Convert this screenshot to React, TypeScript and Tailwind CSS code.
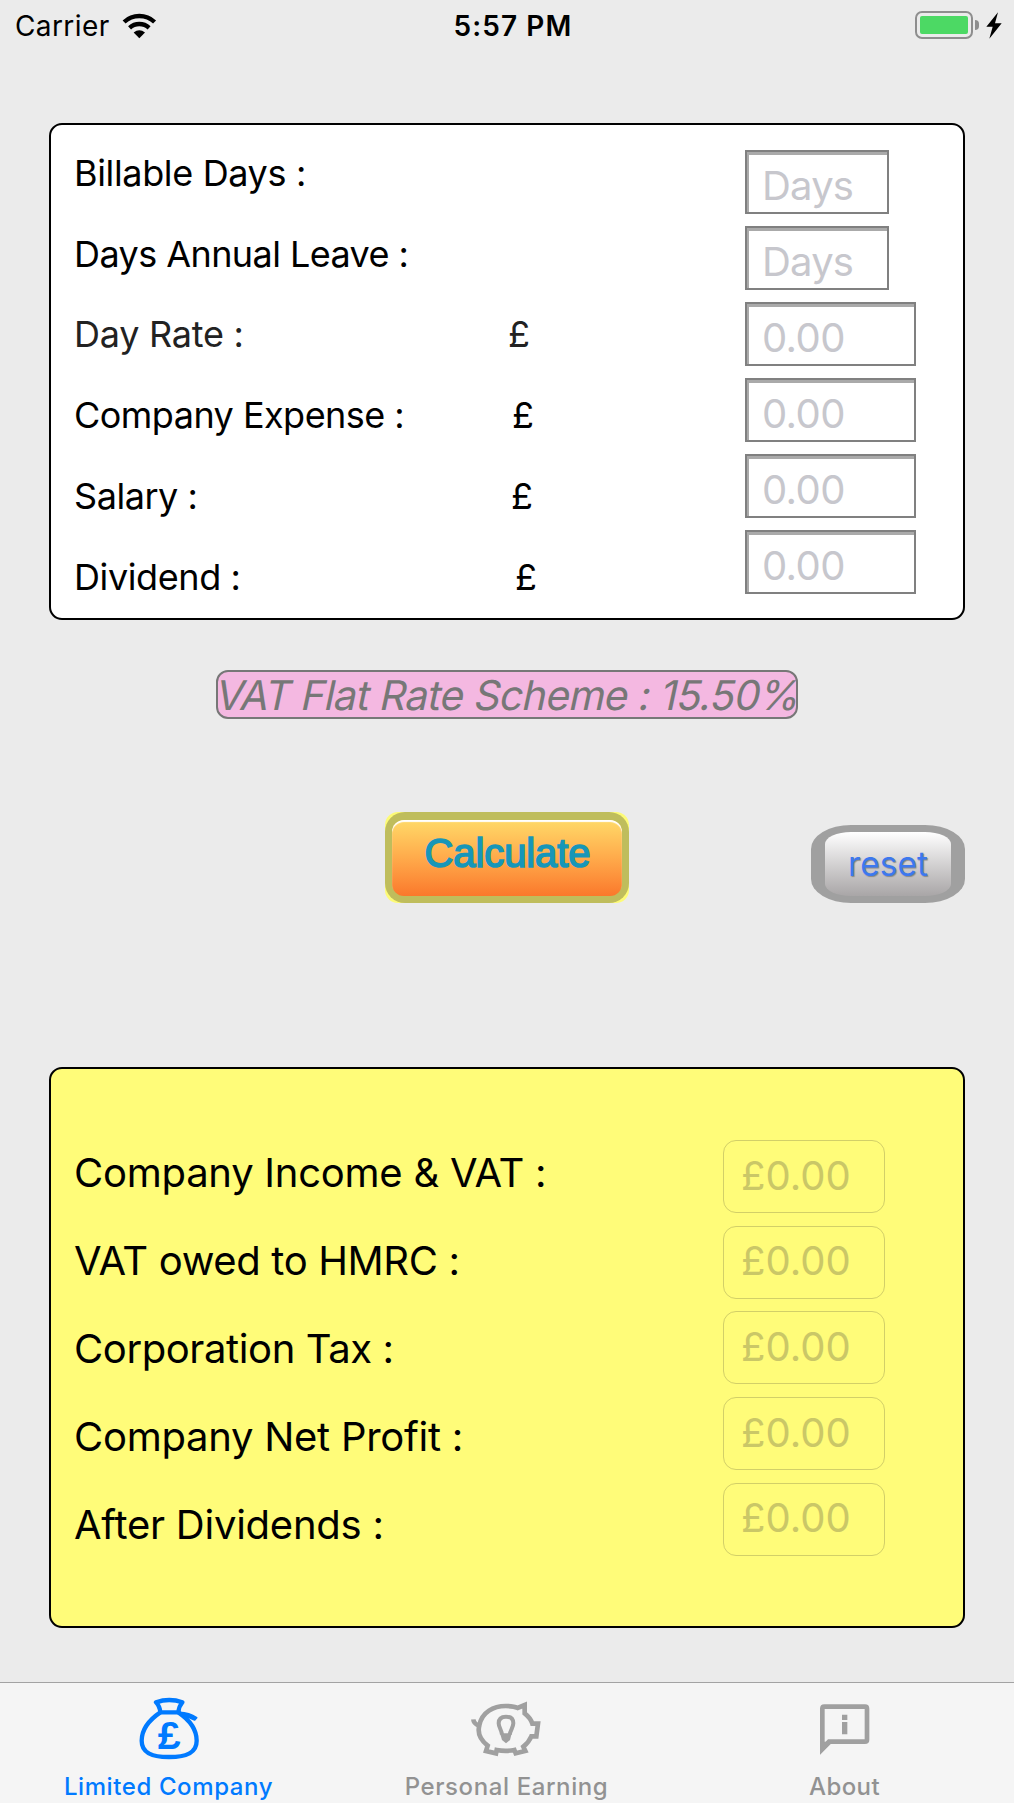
import React from "react";

type InputRow = {
  label: string;
  track: string;
  hint: string;
  width: string;
  tone: string;
  pound?: string;
};

const inputRows: InputRow[] = [
  { label: "Billable Days :", track: "tracking-[-0.35px]", hint: "Days", width: "w-[144px]", tone: "text-black" },
  { label: "Days Annual Leave :", track: "tracking-[-0.57px]", hint: "Days", width: "w-[144px]", tone: "text-black" },
  { label: "Day Rate :", track: "tracking-[-0.25px]", hint: "0.00", width: "w-[171px]", tone: "text-[#222222]", pound: "pl-[2px]" },
  { label: "Company Expense :", track: "tracking-[-0.53px]", hint: "0.00", width: "w-[171px]", tone: "text-black", pound: "pl-[6px]" },
  { label: "Salary :", track: "tracking-[-0.45px]", hint: "0.00", width: "w-[171px]", tone: "text-black", pound: "pl-[5px]" },
  { label: "Dividend :", track: "tracking-[-0.4px]", hint: "0.00", width: "w-[171px]", tone: "text-black", pound: "pl-[9px]" },
];

const resultRows = [
  { label: "Company Income & VAT :", track: "tracking-[-0.25px]" },
  { label: "VAT owed to HMRC :", track: "tracking-[-0.35px]" },
  { label: "Corporation Tax :", track: "tracking-[-0.4px]" },
  { label: "Company Net Profit :", track: "tracking-[-0.27px]" },
  { label: "After Dividends :", track: "tracking-[-0.25px]" },
];

function WifiIcon() {
  return (
    <svg className="h-[26px] w-[35px]" viewBox="367 34 105 78" fill="none" stroke="#000" strokeWidth="13">
      <path d="M373.3 61A67 67 0 0 1 464.7 61" />
      <path d="M389.7 78.6A43 43 0 0 1 448.3 78.6" />
      <path d="M402 92.5Q419 79 436 92.5L419 110Z" fill="#000" stroke="none" />
    </svg>
  );
}

function Battery() {
  return (
    <div className="flex items-center">
      <div className="h-[28px] w-[58px] rounded-[7px] border-2 border-[#8e8e8e] p-[3px]">
        <div className="h-full w-full rounded-[2px] bg-[#4cd964]" />
      </div>
      <div className="ml-[2px] h-[10px] w-[4px] rounded-r-full bg-[#8e8e8e]" />
      <svg className="ml-[7px] h-[27px] w-[16px]" viewBox="320 34 48 81">
        <path d="M356 35L321 78H340L330 114L367 68H347L356 35Z" fill="#000" />
      </svg>
    </div>
  );
}

function MoneyBagIcon() {
  return (
    <svg className="h-[64px] w-[62px]" viewBox="294 78 186 192" fill="none" stroke="#007aff" strokeWidth="13" strokeLinejoin="round">
      <path d="M348 97Q388 83 427 97Q417 108 415 127H361Q359 108 348 97Z" />
      <path d="M361 127C330 148 305 178 305 212C305 250 338 261 387 261C437 261 470 250 470 212C470 178 446 148 415 127" />
      <path d="M418 127Q448 128 470 143L464 150Q448 142 432 138Z" fill="#007aff" strokeWidth="5" />
      <text x="387" y="237" textAnchor="middle" fontFamily="Liberation Mono" fontWeight="700" fontSize="122" fill="#007aff" stroke="none">£</text>
    </svg>
  );
}

function PiggyIcon() {
  return (
    <svg className="h-[58px] w-[72px]" viewBox="241 92 216 174" fill="none" stroke="#a0a0a0" strokeWidth="14">
      <path d="M269 168C277 128 312 110 348 110C363 110 378 113 384 116L405 107V132Q423 146 428 163H445L440 201H425C419 215 410 225 401 232L407 245L378 252L374 242Q348 247 321 242L319 252L289 245L294 229C270 210 263 190 269 168Z" />
      <path d="M251 150Q252 163 268 169" />
      <path d="M337 196C336 182 327 174 327 162C327 148 336 142 349 142C362 142 371 148 371 162C371 174 362 182 360 196" strokeWidth="12" />
      <path d="M331 192H366L361 212L349 222L337 212Z" fill="#a0a0a0" stroke="none" />
    </svg>
  );
}

function InfoBubbleIcon() {
  return (
    <svg className="h-[51px] w-[51px]" viewBox="116 102 153 153" fill="none" stroke="#a0a0a0" strokeWidth="14">
      <path d="M126 236V116Q126 110 132 110H254Q260 110 260 116V209Q260 215 254 215H146Z" />
      <path d="M119 254V215L158 215Z" fill="#a0a0a0" stroke="none" />
      <path d="M193 134V150M193 156V193" strokeWidth="16" />
    </svg>
  );
}

export default function App() {
  return (
    <div className="flex h-[1803px] w-[1014px] flex-col overflow-hidden bg-[#ebebeb] font-['Inter',sans-serif] text-black">
      <header className="mb-[72px] grid h-[51px] shrink-0 grid-cols-3 items-center">
        <div className="flex items-center gap-[12px] pl-[15px]">
          <span className="text-[28px] leading-none tracking-[0.4px]">Carrier</span>
          <WifiIcon />
        </div>
        <div className="pl-[12px] text-center text-[28px] leading-none font-semibold tracking-[1.1px]">5:57 PM</div>
        <div className="flex justify-end pr-[12px] pb-px">
          <Battery />
        </div>
      </header>

      <section className="mx-[49px] flex h-[497px] shrink-0 rounded-[13px] border-2 border-black bg-white pl-[23px]">
        <div className="flex w-[432px] flex-col pt-[7.4px]">
          {inputRows.map((row) => (
            <div key={row.label} className={`flex h-[80.8px] items-center text-[36px] leading-none whitespace-nowrap ${row.track} ${row.tone}`}>
              {row.label}
            </div>
          ))}
        </div>
        <div className="flex w-[239px] flex-col pt-[7.4px]">
          {inputRows.map((row) => (
            <div key={row.label} className={`flex h-[80.8px] items-center text-[36px] leading-none ${row.tone} ${row.pound ?? ""}`}>
              {row.pound ? "£" : ""}
            </div>
          ))}
        </div>
        <div className="flex flex-col gap-[12px] pt-[25px]">
          {inputRows.map((row) => (
            <div key={row.label} className={`h-[64px] border-2 border-[#808080] ${row.width}`}>
              <div className="flex h-full items-center border-t-[3px] border-l-2 border-[#aaaaaa] pt-[4px] pl-[13px] text-[40px] leading-none text-[#c7c7cd]">
                {row.hint === "0.00" ? <span className="tracking-[-0.6px]">{row.hint}</span> : <span className="tracking-[-0.8px]">{row.hint}</span>}
              </div>
            </div>
          ))}
        </div>
      </section>

      <div className="mt-[50px] ml-[216px] flex h-[49px] w-[582px] shrink-0 items-center justify-center rounded-[12px] border-2 border-[#777777] bg-[#f4b8e1]">
        <span className="inline-block -skew-x-12 pt-px pl-[3px] text-[41px] leading-[44px] tracking-[-0.68px] whitespace-nowrap text-[#777777]">
          VAT Flat Rate Scheme : 15.50%
        </span>
      </div>

      <div className="mx-[49px] mt-[93px] grid h-[91px] shrink-0 grid-cols-3 items-end">
        <button className="col-start-2 h-[91px] w-[244px] justify-self-center rounded-[13px] bg-[#fdfb76]">
          <span className="block h-full w-full rounded-[20px] bg-[#bfbd5c] px-[7px] pt-[8px] pb-[7px]">
            <span className="flex h-full w-full items-center justify-center rounded-[12px] bg-linear-to-b from-[#fed968] to-[#fa782b] pb-[11px] pl-px font-['Liberation_Sans',sans-serif] text-[40px] leading-none tracking-[-0.1px] text-[#1796b8] shadow-[inset_0_2px_1px_#ffffff] [-webkit-text-stroke:1.6px_#1796b8]">
              Calculate
            </span>
          </span>
        </button>
        <button className="h-[78px] w-[154px] justify-self-end rounded-[40px/24px] bg-[#a0a0a0] px-[14px] py-[7px]">
          <span className="flex h-full w-full items-center justify-center rounded-[26px/12px] bg-linear-to-b from-white to-[#a9a6a7] pt-px text-[33.5px] leading-none text-[#3d78ee] [text-shadow:1px_1px_1px_#888]">
            reset
          </span>
        </button>
      </div>

      <section className="mx-[49px] mt-[164px] flex h-[561px] shrink-0 rounded-[13px] border-2 border-black bg-[#fffc79] pl-[23px]">
        <div className="flex w-[649px] flex-col pt-[60px]">
          {resultRows.map((row) => (
            <div key={row.label} className={`flex h-[88px] items-center text-[40px] leading-none whitespace-nowrap ${row.track}`}>
              {row.label}
            </div>
          ))}
        </div>
        <div className="flex flex-col gap-[12.7px] pt-[71px]">
          {resultRows.map((row) => (
            <div key={row.label} className="flex h-[73px] w-[162px] items-center rounded-[13px] border border-[#d2cf68] pb-[2px] pl-[17px] text-[40px] leading-none text-[#cac767]">
              £0.00
            </div>
          ))}
        </div>
      </section>

      <nav className="mt-auto grid h-[121px] shrink-0 grid-cols-3 border-t border-[#a3a3a3] bg-[#f5f5f5] text-[24px] leading-none font-medium text-[#929292]">
        <div className="flex flex-col items-center text-[#007aff]">
          <div className="flex h-[92px] items-center pb-[3px]"><MoneyBagIcon /></div>
          <span className="pr-px tracking-[0.6px]">Limited Company</span>
        </div>
        <div className="flex flex-col items-center">
          <div className="flex h-[92px] items-center pr-[2px]"><PiggyIcon /></div>
          <span className="pr-px tracking-[0.6px]">Personal Earning</span>
        </div>
        <div className="flex flex-col items-center">
          <div className="flex h-[92px] items-center pr-[2px]"><InfoBubbleIcon /></div>
          <span className="pr-px tracking-[0.4px]">About</span>
        </div>
      </nav>
    </div>
  );
}
